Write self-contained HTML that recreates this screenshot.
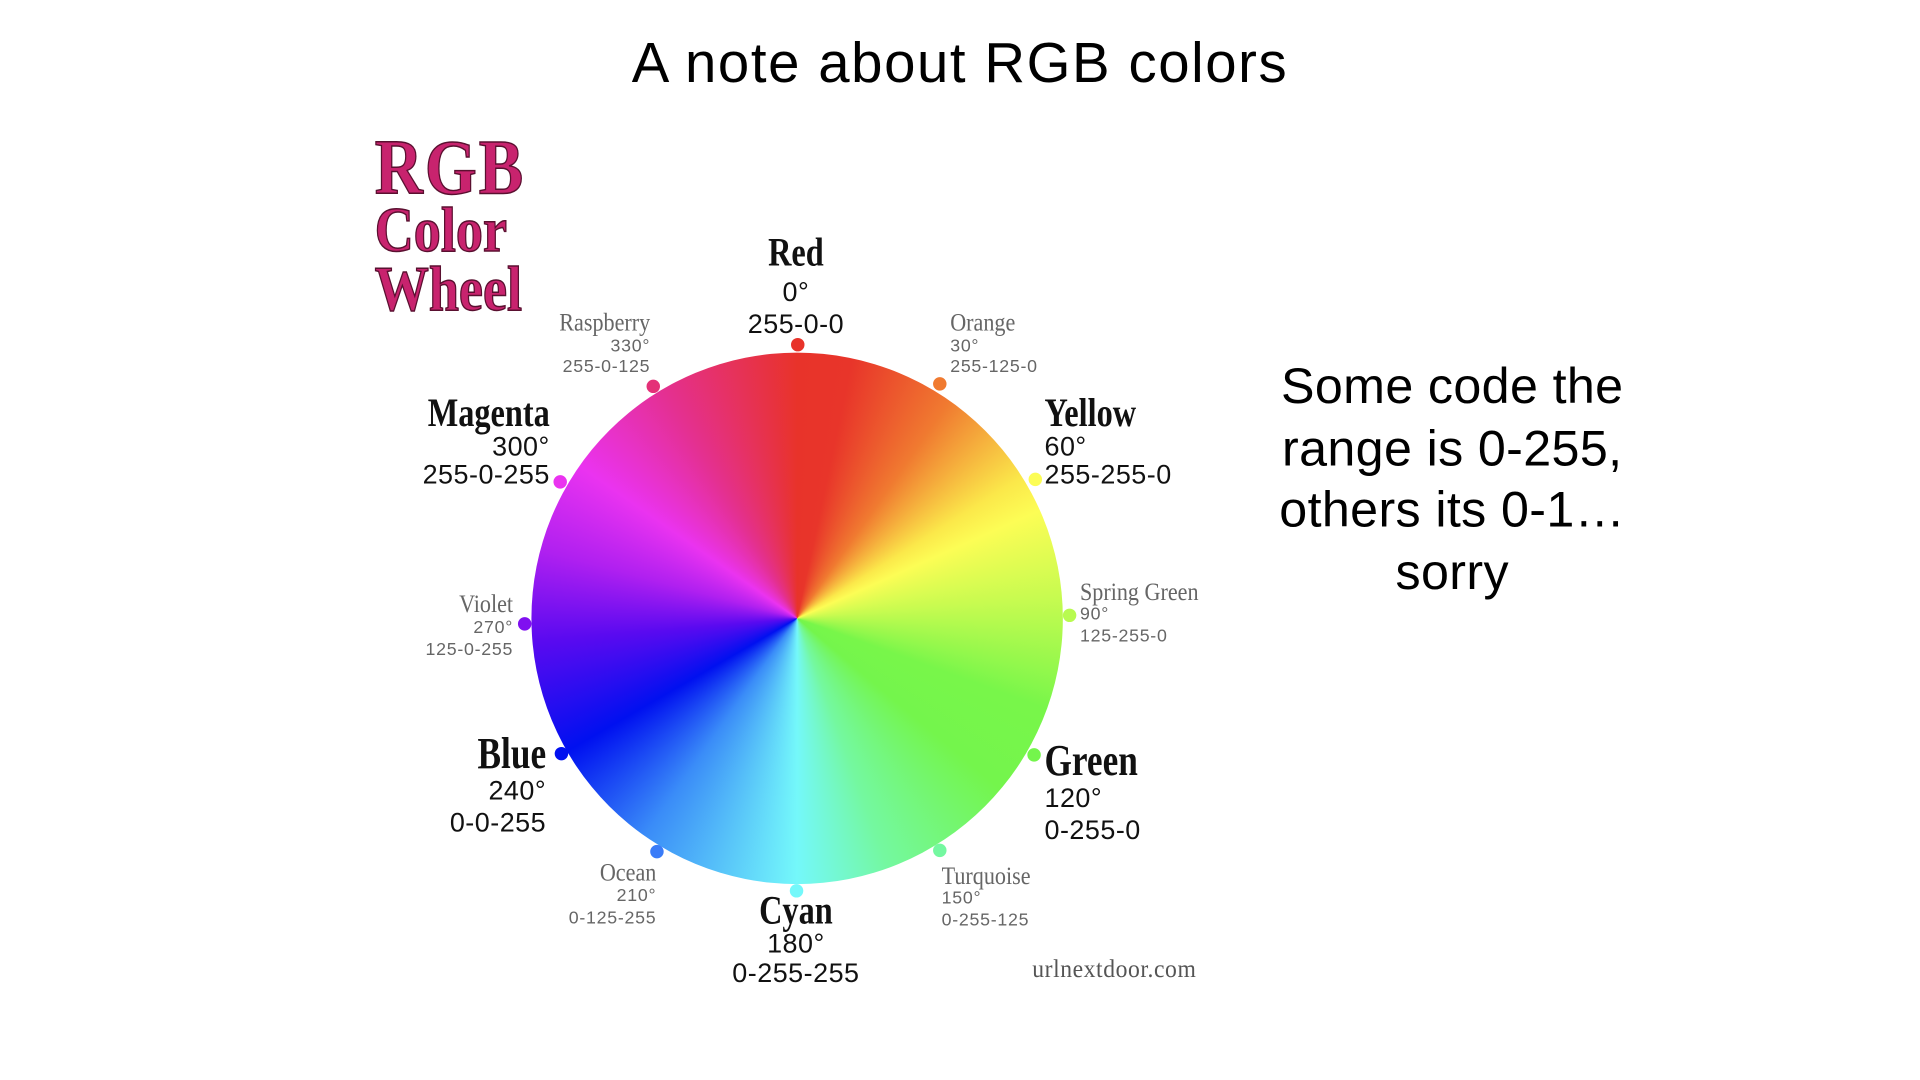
<!DOCTYPE html>
<html><head><meta charset="utf-8"><style>
html,body{margin:0;padding:0;background:#fff;overflow:hidden}
#s{position:absolute;left:0;top:0;width:1568px;height:882px;transform:scale(1.22449);transform-origin:0 0}
.t{position:absolute;white-space:nowrap;line-height:1}
.sf{font-family:"Liberation Serif",serif;transform:scaleX(.86)}
.sa{font-family:"Liberation Sans",sans-serif}
.r{text-align:right}
.c{text-align:center}
.big{font-size:33px;color:#111;font-weight:bold;transform:scaleX(.8)}
.bn{font-size:22px;color:#111;letter-spacing:.4px}
.sm{font-size:21px;color:#666}
.sn{font-size:14.5px;color:#666;letter-spacing:.6px}
.dot{position:absolute;width:11px;height:11px;border-radius:50%;margin:-5.5px 0 0 -5.5px}
</style></head><body><div id="s">
<div class="t sa c" style="left:0;width:1568px;top:28px;font-size:46px;letter-spacing:1.3px;color:#000">A note about RGB colors</div>

<div class="t" style="left:306px;top:110px;font-family:'Liberation Serif',serif;font-weight:bold;color:#c8236e;-webkit-text-stroke:1.2px #5a1030;transform:scaleX(.85);transform-origin:0 0">
<div style="font-size:64px;line-height:54px;letter-spacing:2px">RGB</div>
<div style="font-size:52px;line-height:50px">Color</div>
<div style="font-size:52px;line-height:46px">Wheel</div>
</div>

<div style="position:absolute;left:434px;top:288px;width:434px;height:434px;border-radius:50%;background:conic-gradient(from 0deg,#e8332a 0deg,#e8352a 12deg,#f07a30 35deg,#fbe84a 58deg,#fcfd55 66deg,#c8fb50 85deg,#78f64a 110deg,#74f54c 130deg,#74f8a0 160deg,#74f8fa 180deg,#3a8cf8 215deg,#0010f0 240deg,#5a0af0 265deg,#b020f0 285deg,#ea33f0 305deg,#e43090 330deg,#e8332a 360deg)"></div>

<div class="dot" style="left:651px;top:281px;background:#e8332a"></div>
<div class="dot" style="left:767px;top:313px;background:#f07a30"></div>
<div class="dot" style="left:845px;top:391px;background:#fcfd55"></div>
<div class="dot" style="left:873px;top:502px;background:#b8fb50"></div>
<div class="dot" style="left:844px;top:616px;background:#74f54c"></div>
<div class="dot" style="left:767px;top:694px;background:#74f8a0"></div>
<div class="dot" style="left:650px;top:727px;background:#74f8fa"></div>
<div class="dot" style="left:536px;top:695px;background:#3a7cf8"></div>
<div class="dot" style="left:458px;top:615px;background:#0010f0"></div>
<div class="dot" style="left:428px;top:509px;background:#8010f0"></div>
<div class="dot" style="left:457px;top:393px;background:#ea33f0"></div>
<div class="dot" style="left:533px;top:315px;background:#e43078"></div>

<div class="t sf c big" style="left:550px;width:200px;top:191px">Red</div>
<div class="t sa c bn" style="left:550px;width:200px;top:228px">0°</div>
<div class="t sa c bn" style="left:550px;width:200px;top:254px">255-0-0</div>
<div class="t sf c big" style="left:550px;width:200px;top:728px">Cyan</div>
<div class="t sa c bn" style="left:550px;width:200px;top:760px">180°</div>
<div class="t sa c bn" style="left:550px;width:200px;top:784px">0-255-255</div>
<div class="t sf r big" style="left:249px;width:200px;top:322px;transform-origin:100% 0">Magenta</div>
<div class="t sa r bn" style="left:249px;width:200px;top:354px">300°</div>
<div class="t sa r bn" style="left:249px;width:200px;top:377px">255-0-255</div>
<div class="t sf r big" style="left:246px;width:200px;top:597px;font-size:36px;transform-origin:100% 0">Blue</div>
<div class="t sa r bn" style="left:246px;width:200px;top:635px">240°</div>
<div class="t sa r bn" style="left:246px;width:200px;top:661px">0-0-255</div>
<div class="t sf big" style="left:853px;top:322px;transform-origin:0 0">Yellow</div>
<div class="t sa bn" style="left:853px;top:354px">60°</div>
<div class="t sa bn" style="left:853px;top:377px">255-255-0</div>
<div class="t sf big" style="left:853px;top:603px;font-size:36px;transform-origin:0 0">Green</div>
<div class="t sa bn" style="left:853px;top:641px">120°</div>
<div class="t sa bn" style="left:853px;top:667px">0-255-0</div>

<div class="t sf r sm" style="left:331px;width:200px;top:253px;transform-origin:100% 0">Raspberry</div>
<div class="t sa r sn" style="left:331px;width:200px;top:276px">330°</div>
<div class="t sa r sn" style="left:331px;width:200px;top:293px">255-0-125</div>

<div class="t sf sm" style="left:776px;top:253px;transform-origin:0 0">Orange</div>
<div class="t sa sn" style="left:776px;top:276px">30°</div>
<div class="t sa sn" style="left:776px;top:293px">255-125-0</div>

<div class="t sf r sm" style="left:219px;width:200px;top:483px;transform-origin:100% 0">Violet</div>
<div class="t sa r sn" style="left:219px;width:200px;top:506px">270°</div>
<div class="t sa r sn" style="left:219px;width:200px;top:524px">125-0-255</div>

<div class="t sf sm" style="left:882px;top:473px;transform-origin:0 0">Spring Green</div>
<div class="t sa sn" style="left:882px;top:495px">90°</div>
<div class="t sa sn" style="left:882px;top:513px">125-255-0</div>

<div class="t sf r sm" style="left:336px;width:200px;top:702px;transform-origin:100% 0">Ocean</div>
<div class="t sa r sn" style="left:336px;width:200px;top:725px">210°</div>
<div class="t sa r sn" style="left:336px;width:200px;top:743px">0-125-255</div>

<div class="t sf sm" style="left:769px;top:705px;transform-origin:0 0">Turquoise</div>
<div class="t sa sn" style="left:769px;top:727px">150°</div>
<div class="t sa sn" style="left:769px;top:745px">0-255-125</div>

<div class="t" style="left:843px;top:781px;font-family:'Liberation Serif',serif;font-size:21px;color:#555;letter-spacing:.5px;transform:scaleX(.92);transform-origin:0 0">urlnextdoor.com</div>

<div class="t sa c" style="left:986px;width:400px;top:290px;font-size:41px;line-height:50.5px;letter-spacing:.3px;color:#000">Some code the<br>range is 0-255,<br>others its 0-1…<br>sorry</div>
</div></body></html>
